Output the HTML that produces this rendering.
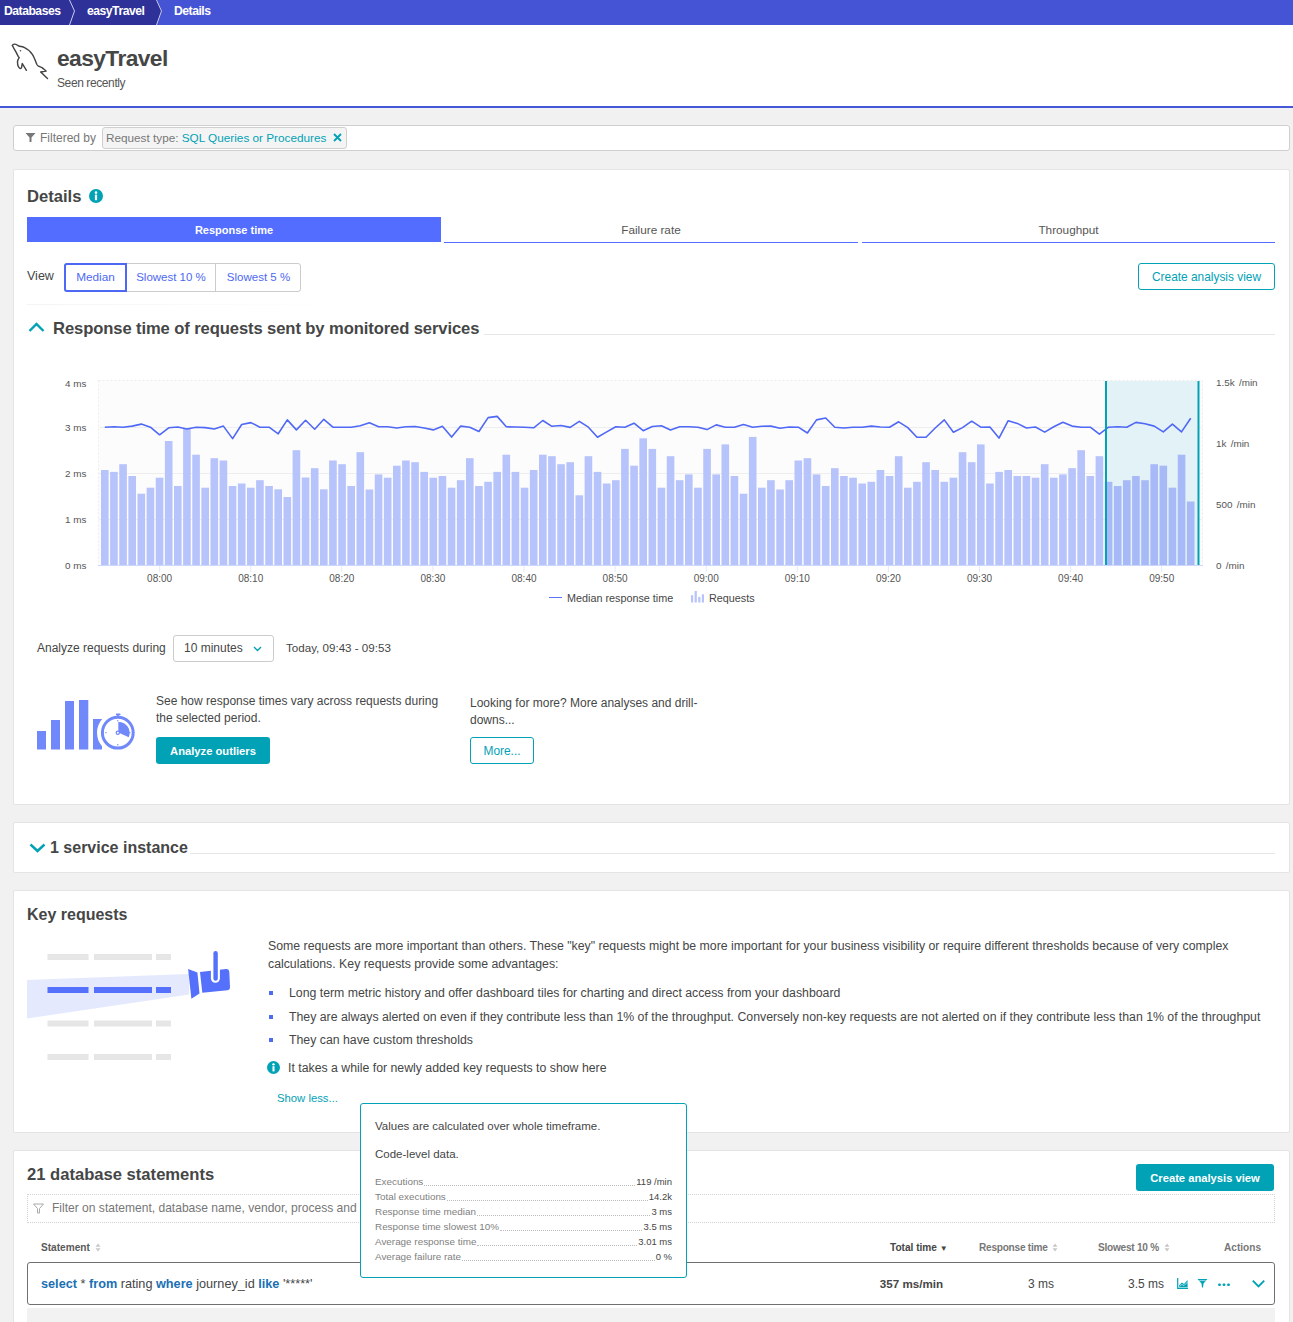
<!DOCTYPE html>
<html><head><meta charset="utf-8">
<style>
*{box-sizing:border-box;margin:0;padding:0}
html,body{width:1293px;height:1322px;overflow:hidden}
body{font-family:"Liberation Sans",sans-serif;color:#454646;background:#f1f1f1;position:relative}
.a{position:absolute;white-space:nowrap}
.card{position:absolute;background:#fff;border:1px solid #e4e4e4;border-radius:2px}
.teal{color:#02a2b6}
.btn-o{position:absolute;border:1px solid #02a2b6;border-radius:3px;color:#02a2b6;background:#fff;font-size:11.9px;text-align:center}
.btn-f{position:absolute;background:#02a2b6;border-radius:3px;color:#fff;font-weight:bold;font-size:11.2px;text-align:center}
</style></head><body>
<!-- breadcrumb -->
<div class="a" style="left:0;top:0;width:1293px;height:25px;background:#4454d4"></div>
<svg class="a" style="left:0;top:0" width="200" height="25">
<polygon points="0,0 157,0 162,11 157,25 0,25" fill="#2e3197"/>
<polyline points="69.5,0 74.5,11 69.5,25" fill="none" stroke="#c9cdf0" stroke-width="1"/>
<polyline points="156.5,0 161.5,11 156.5,25" fill="none" stroke="#c9cdf0" stroke-width="1"/>
</svg>
<div class="a" style="left:4px;top:4px;font-size:12.2px;font-weight:bold;color:#fff;line-height:14px;letter-spacing:-0.5px">Databases</div>
<div class="a" style="left:87px;top:4px;font-size:12.2px;font-weight:bold;color:#fff;line-height:14px;letter-spacing:-0.5px">easyTravel</div>
<div class="a" style="left:174px;top:4px;font-size:12.2px;font-weight:bold;color:#fff;line-height:14px;letter-spacing:-0.5px">Details</div>
<!-- header -->
<div class="a" style="left:0;top:25px;width:1293px;height:81px;background:#fff"></div>
<div class="a" style="left:0;top:106.3px;width:1293px;height:1.3px;background:#4556d7"></div>
<svg class="a" style="left:8px;top:38px" width="44" height="44" viewBox="0 0 44 44">
<path d="M4.4,7.5 C5,5.8 7,5.6 9.9,7.5 L11.6,8.3 C13,8.6 14.6,8.8 15.7,9.2 C18,10.2 22,13 24.5,16.7 C26,19 27.5,23 28.9,26.5 C29.5,27.5 30,28 30.6,28.2 L34,29.6 L38.1,33 L32.7,34 L39.5,40.5" fill="none" stroke="#444" stroke-width="1.45" stroke-linejoin="round" stroke-linecap="round"/>
<path d="M4.4,7.5 C5.5,10 7,12 7.8,13.6 L10.2,18.4 L11.2,19.7 C10,21.5 9.5,22.5 9.5,23.8 C9.5,26 9.8,27.5 10.2,28.2 C11,29.5 11.5,30.6 12.2,30.6 C13,30.6 13.5,29.5 13.6,29.3 L14.3,25.5 L18.4,32.3" fill="none" stroke="#444" stroke-width="1.45" stroke-linejoin="round" stroke-linecap="round"/>
<circle cx="12.5" cy="12.7" r="0.8" fill="#4a4a4a"/>
</svg>
<div class="a" style="left:57px;top:45px;font-size:22.8px;font-weight:bold;color:#454646;line-height:27px;letter-spacing:-0.6px">easyTravel</div>
<div class="a" style="left:57px;top:75.5px;font-size:12px;color:#555;line-height:14px;letter-spacing:-0.4px">Seen recently</div>
<!-- filter bar -->
<div class="a" style="left:13px;top:125px;width:1277px;height:26px;background:#fff;border:1px solid #cfcfcf;border-radius:3px"></div>
<svg class="a" style="left:25px;top:132px" width="11" height="11" viewBox="0 0 11 11"><path d="M0.5,1 L10.5,1 L6.5,5.5 L6.5,10 L4.5,10 L4.5,5.5 Z" fill="#777"/></svg>
<div class="a" style="left:40px;top:131px;font-size:12px;color:#777;line-height:14px">Filtered by</div>
<div class="a" style="left:102px;top:127px;width:245px;height:22px;background:#f4f4f4;border:1px solid #cfcfcf;border-radius:3px"></div>
<div class="a" style="left:106px;top:131px;font-size:11.75px;color:#777;line-height:14px">Request type: <span class="teal">SQL Queries or Procedures</span></div>
<svg class="a" style="left:333px;top:133px" width="9" height="9" viewBox="0 0 9 9"><path d="M1,1 L8,8 M8,1 L1,8" stroke="#02a2b6" stroke-width="1.8"/></svg>

<!-- details card -->
<div class="card" style="left:13px;top:169px;width:1277px;height:636px"></div>
<div class="a" style="left:27px;top:187px;font-size:16.6px;font-weight:bold;line-height:20px">Details</div>
<svg class="a" style="left:89px;top:189px" width="14" height="14" viewBox="0 0 14 14"><circle cx="7" cy="7" r="7" fill="#02a2b6"/><circle cx="7" cy="3.6" r="1.3" fill="#fff"/><rect x="5.9" y="5.6" width="2.2" height="5.6" fill="#fff"/></svg>
<div class="a" style="left:27px;top:217px;width:414px;height:25px;background:#526dff;color:#fff;font-weight:bold;font-size:11px;text-align:center;line-height:26px">Response time</div>
<div class="a" style="left:444px;top:217px;width:414px;height:26px;border-bottom:1.3px solid #526dff;color:#555;font-size:11.75px;text-align:center;line-height:26px">Failure rate</div>
<div class="a" style="left:862px;top:217px;width:413px;height:26px;border-bottom:1.3px solid #526dff;color:#555;font-size:11.75px;text-align:center;line-height:26px">Throughput</div>
<div class="a" style="left:27px;top:269px;font-size:12.5px;color:#454646;line-height:14px">View</div>
<div class="a" style="left:64px;top:263px;width:237px;height:29px;border:1px solid #ccc;border-radius:3px"></div>
<div class="a" style="left:215px;top:263px;width:1px;height:29px;background:#ccc"></div>
<div class="a" style="left:64px;top:263px;width:63px;height:29px;border:2px solid #4d68f2;border-radius:3px 0 0 3px;color:#4d68f2;font-size:11.8px;text-align:center;line-height:25px">Median</div>
<div class="a" style="left:127px;top:263px;width:88px;height:29px;color:#4d68f2;font-size:11.5px;text-align:center;line-height:28px">Slowest 10 %</div>
<div class="a" style="left:216px;top:263px;width:85px;height:29px;color:#4d68f2;font-size:11.5px;text-align:center;line-height:28px">Slowest 5 %</div>
<div class="btn-o" style="left:1138px;top:263px;width:137px;height:27px;line-height:26.5px">Create analysis view</div>
<div class="a" style="left:27px;top:304px;width:320px;height:1px;background:linear-gradient(90deg,#f4f4f4,#fcfcfc 70%,#fff)"></div>
<svg class="a" style="left:28px;top:321px" width="17" height="12" viewBox="0 0 17 12"><polyline points="1.5,10 8.5,3 15.5,10" fill="none" stroke="#02a2b6" stroke-width="2.4"/></svg>
<div class="a" style="left:53px;top:319px;font-size:16.6px;font-weight:bold;line-height:20px;letter-spacing:-0.1px">Response time of requests sent by monitored services</div>
<div class="a" style="left:484px;top:334px;width:791px;height:1px;background:#e6e6e6"></div>

<!-- chart -->
<svg class="a" style="left:0;top:0" width="1293" height="620">
<rect x="98.5" y="380.5" width="1104" height="185" fill="#fcfcfc" stroke="#ececec" stroke-dasharray="2,2"/>
<line x1="99" y1="427.5" x2="1202" y2="427.5" stroke="#eeeeee"/>
<line x1="99" y1="473.5" x2="1202" y2="473.5" stroke="#eeeeee"/>
<line x1="99" y1="519.5" x2="1202" y2="519.5" stroke="#eeeeee"/>
<rect x="1106" y="381" width="92" height="184" fill="#e3f2f6"/>
<rect x="101.00" y="470.0" width="7.6" height="95.5" fill="#b7c3fb"/>
<rect x="110.12" y="471.9" width="7.6" height="93.6" fill="#b7c3fb"/>
<rect x="119.25" y="464.2" width="7.6" height="101.3" fill="#b7c3fb"/>
<rect x="128.38" y="476.0" width="7.6" height="89.5" fill="#b7c3fb"/>
<rect x="137.50" y="493.7" width="7.6" height="71.8" fill="#b7c3fb"/>
<rect x="146.62" y="487.7" width="7.6" height="77.8" fill="#b7c3fb"/>
<rect x="155.75" y="477.7" width="7.6" height="87.8" fill="#b7c3fb"/>
<rect x="164.88" y="441.0" width="7.6" height="124.5" fill="#b7c3fb"/>
<rect x="174.00" y="486.0" width="7.6" height="79.5" fill="#b7c3fb"/>
<rect x="183.12" y="429.0" width="7.6" height="136.5" fill="#b7c3fb"/>
<rect x="192.25" y="454.7" width="7.6" height="110.8" fill="#b7c3fb"/>
<rect x="201.38" y="487.7" width="7.6" height="77.8" fill="#b7c3fb"/>
<rect x="210.50" y="458.2" width="7.6" height="107.3" fill="#b7c3fb"/>
<rect x="219.62" y="460.5" width="7.6" height="105.0" fill="#b7c3fb"/>
<rect x="228.75" y="486.0" width="7.6" height="79.5" fill="#b7c3fb"/>
<rect x="237.88" y="483.5" width="7.6" height="82.0" fill="#b7c3fb"/>
<rect x="247.00" y="487.7" width="7.6" height="77.8" fill="#b7c3fb"/>
<rect x="256.12" y="480.2" width="7.6" height="85.3" fill="#b7c3fb"/>
<rect x="265.25" y="486.0" width="7.6" height="79.5" fill="#b7c3fb"/>
<rect x="274.38" y="489.3" width="7.6" height="76.2" fill="#b7c3fb"/>
<rect x="283.50" y="497.0" width="7.6" height="68.5" fill="#b7c3fb"/>
<rect x="292.62" y="450.2" width="7.6" height="115.3" fill="#b7c3fb"/>
<rect x="301.75" y="477.5" width="7.6" height="88.0" fill="#b7c3fb"/>
<rect x="310.88" y="468.2" width="7.6" height="97.3" fill="#b7c3fb"/>
<rect x="320.00" y="489.3" width="7.6" height="76.2" fill="#b7c3fb"/>
<rect x="329.12" y="460.5" width="7.6" height="105.0" fill="#b7c3fb"/>
<rect x="338.25" y="464.2" width="7.6" height="101.3" fill="#b7c3fb"/>
<rect x="347.38" y="486.0" width="7.6" height="79.5" fill="#b7c3fb"/>
<rect x="356.50" y="452.2" width="7.6" height="113.3" fill="#b7c3fb"/>
<rect x="365.62" y="489.5" width="7.6" height="76.0" fill="#b7c3fb"/>
<rect x="374.75" y="474.4" width="7.6" height="91.1" fill="#b7c3fb"/>
<rect x="383.88" y="477.7" width="7.6" height="87.8" fill="#b7c3fb"/>
<rect x="393.00" y="465.7" width="7.6" height="99.8" fill="#b7c3fb"/>
<rect x="402.12" y="460.5" width="7.6" height="105.0" fill="#b7c3fb"/>
<rect x="411.25" y="462.2" width="7.6" height="103.3" fill="#b7c3fb"/>
<rect x="420.38" y="471.9" width="7.6" height="93.6" fill="#b7c3fb"/>
<rect x="429.50" y="477.7" width="7.6" height="87.8" fill="#b7c3fb"/>
<rect x="438.62" y="476.0" width="7.6" height="89.5" fill="#b7c3fb"/>
<rect x="447.75" y="487.7" width="7.6" height="77.8" fill="#b7c3fb"/>
<rect x="456.88" y="480.2" width="7.6" height="85.3" fill="#b7c3fb"/>
<rect x="466.00" y="458.2" width="7.6" height="107.3" fill="#b7c3fb"/>
<rect x="475.12" y="486.0" width="7.6" height="79.5" fill="#b7c3fb"/>
<rect x="484.25" y="481.8" width="7.6" height="83.7" fill="#b7c3fb"/>
<rect x="493.38" y="471.9" width="7.6" height="93.6" fill="#b7c3fb"/>
<rect x="502.50" y="454.7" width="7.6" height="110.8" fill="#b7c3fb"/>
<rect x="511.62" y="471.9" width="7.6" height="93.6" fill="#b7c3fb"/>
<rect x="520.75" y="487.7" width="7.6" height="77.8" fill="#b7c3fb"/>
<rect x="529.88" y="470.0" width="7.6" height="95.5" fill="#b7c3fb"/>
<rect x="539.00" y="454.7" width="7.6" height="110.8" fill="#b7c3fb"/>
<rect x="548.12" y="456.2" width="7.6" height="109.3" fill="#b7c3fb"/>
<rect x="557.25" y="464.2" width="7.6" height="101.3" fill="#b7c3fb"/>
<rect x="566.38" y="462.2" width="7.6" height="103.3" fill="#b7c3fb"/>
<rect x="575.50" y="495.3" width="7.6" height="70.2" fill="#b7c3fb"/>
<rect x="584.62" y="456.2" width="7.6" height="109.3" fill="#b7c3fb"/>
<rect x="593.75" y="471.9" width="7.6" height="93.6" fill="#b7c3fb"/>
<rect x="602.88" y="483.5" width="7.6" height="82.0" fill="#b7c3fb"/>
<rect x="612.00" y="480.2" width="7.6" height="85.3" fill="#b7c3fb"/>
<rect x="621.12" y="448.9" width="7.6" height="116.6" fill="#b7c3fb"/>
<rect x="630.25" y="465.7" width="7.6" height="99.8" fill="#b7c3fb"/>
<rect x="639.38" y="438.3" width="7.6" height="127.2" fill="#b7c3fb"/>
<rect x="648.50" y="448.9" width="7.6" height="116.6" fill="#b7c3fb"/>
<rect x="657.62" y="487.7" width="7.6" height="77.8" fill="#b7c3fb"/>
<rect x="666.75" y="456.2" width="7.6" height="109.3" fill="#b7c3fb"/>
<rect x="675.88" y="480.2" width="7.6" height="85.3" fill="#b7c3fb"/>
<rect x="685.00" y="474.4" width="7.6" height="91.1" fill="#b7c3fb"/>
<rect x="694.12" y="487.7" width="7.6" height="77.8" fill="#b7c3fb"/>
<rect x="703.25" y="448.9" width="7.6" height="116.6" fill="#b7c3fb"/>
<rect x="712.38" y="474.4" width="7.6" height="91.1" fill="#b7c3fb"/>
<rect x="721.50" y="444.4" width="7.6" height="121.1" fill="#b7c3fb"/>
<rect x="730.62" y="476.0" width="7.6" height="89.5" fill="#b7c3fb"/>
<rect x="739.75" y="493.7" width="7.6" height="71.8" fill="#b7c3fb"/>
<rect x="748.88" y="436.9" width="7.6" height="128.6" fill="#b7c3fb"/>
<rect x="758.00" y="487.7" width="7.6" height="77.8" fill="#b7c3fb"/>
<rect x="767.12" y="480.2" width="7.6" height="85.3" fill="#b7c3fb"/>
<rect x="776.25" y="489.5" width="7.6" height="76.0" fill="#b7c3fb"/>
<rect x="785.38" y="480.2" width="7.6" height="85.3" fill="#b7c3fb"/>
<rect x="794.50" y="460.5" width="7.6" height="105.0" fill="#b7c3fb"/>
<rect x="803.62" y="458.2" width="7.6" height="107.3" fill="#b7c3fb"/>
<rect x="812.75" y="474.4" width="7.6" height="91.1" fill="#b7c3fb"/>
<rect x="821.88" y="486.0" width="7.6" height="79.5" fill="#b7c3fb"/>
<rect x="831.00" y="468.2" width="7.6" height="97.3" fill="#b7c3fb"/>
<rect x="840.12" y="476.0" width="7.6" height="89.5" fill="#b7c3fb"/>
<rect x="849.25" y="477.7" width="7.6" height="87.8" fill="#b7c3fb"/>
<rect x="858.38" y="483.5" width="7.6" height="82.0" fill="#b7c3fb"/>
<rect x="867.50" y="481.8" width="7.6" height="83.7" fill="#b7c3fb"/>
<rect x="876.62" y="470.0" width="7.6" height="95.5" fill="#b7c3fb"/>
<rect x="885.75" y="476.0" width="7.6" height="89.5" fill="#b7c3fb"/>
<rect x="894.88" y="456.2" width="7.6" height="109.3" fill="#b7c3fb"/>
<rect x="904.00" y="487.7" width="7.6" height="77.8" fill="#b7c3fb"/>
<rect x="913.12" y="481.8" width="7.6" height="83.7" fill="#b7c3fb"/>
<rect x="922.25" y="462.2" width="7.6" height="103.3" fill="#b7c3fb"/>
<rect x="931.38" y="470.0" width="7.6" height="95.5" fill="#b7c3fb"/>
<rect x="940.50" y="481.8" width="7.6" height="83.7" fill="#b7c3fb"/>
<rect x="949.62" y="477.7" width="7.6" height="87.8" fill="#b7c3fb"/>
<rect x="958.75" y="452.2" width="7.6" height="113.3" fill="#b7c3fb"/>
<rect x="967.88" y="462.2" width="7.6" height="103.3" fill="#b7c3fb"/>
<rect x="977.00" y="444.4" width="7.6" height="121.1" fill="#b7c3fb"/>
<rect x="986.12" y="483.5" width="7.6" height="82.0" fill="#b7c3fb"/>
<rect x="995.25" y="471.9" width="7.6" height="93.6" fill="#b7c3fb"/>
<rect x="1004.38" y="470.0" width="7.6" height="95.5" fill="#b7c3fb"/>
<rect x="1013.50" y="476.0" width="7.6" height="89.5" fill="#b7c3fb"/>
<rect x="1022.62" y="476.0" width="7.6" height="89.5" fill="#b7c3fb"/>
<rect x="1031.75" y="477.7" width="7.6" height="87.8" fill="#b7c3fb"/>
<rect x="1040.88" y="464.2" width="7.6" height="101.3" fill="#b7c3fb"/>
<rect x="1050.00" y="477.7" width="7.6" height="87.8" fill="#b7c3fb"/>
<rect x="1059.12" y="474.4" width="7.6" height="91.1" fill="#b7c3fb"/>
<rect x="1068.25" y="468.2" width="7.6" height="97.3" fill="#b7c3fb"/>
<rect x="1077.38" y="450.2" width="7.6" height="115.3" fill="#b7c3fb"/>
<rect x="1086.50" y="476.0" width="7.6" height="89.5" fill="#b7c3fb"/>
<rect x="1095.62" y="456.2" width="7.6" height="109.3" fill="#b7c3fb"/>
<rect x="1104.75" y="481.8" width="7.6" height="83.7" fill="#a7b9f6"/>
<rect x="1113.88" y="486.0" width="7.6" height="79.5" fill="#a7b9f6"/>
<rect x="1123.00" y="480.2" width="7.6" height="85.3" fill="#a7b9f6"/>
<rect x="1132.12" y="476.0" width="7.6" height="89.5" fill="#a7b9f6"/>
<rect x="1141.25" y="480.2" width="7.6" height="85.3" fill="#a7b9f6"/>
<rect x="1150.38" y="464.2" width="7.6" height="101.3" fill="#a7b9f6"/>
<rect x="1159.50" y="465.7" width="7.6" height="99.8" fill="#a7b9f6"/>
<rect x="1168.62" y="487.7" width="7.6" height="77.8" fill="#a7b9f6"/>
<rect x="1177.75" y="454.7" width="7.6" height="110.8" fill="#a7b9f6"/>
<rect x="1186.88" y="501.5" width="7.6" height="64.0" fill="#a7b9f6"/>
<rect x="159.1" y="566" width="1" height="6" fill="#e3ecf6"/>
<rect x="250.2" y="566" width="1" height="6" fill="#e3ecf6"/>
<rect x="341.3" y="566" width="1" height="6" fill="#e3ecf6"/>
<rect x="432.4" y="566" width="1" height="6" fill="#e3ecf6"/>
<rect x="523.5" y="566" width="1" height="6" fill="#e3ecf6"/>
<rect x="614.6" y="566" width="1" height="6" fill="#e3ecf6"/>
<rect x="705.7" y="566" width="1" height="6" fill="#e3ecf6"/>
<rect x="796.8" y="566" width="1" height="6" fill="#e3ecf6"/>
<rect x="887.9" y="566" width="1" height="6" fill="#e3ecf6"/>
<rect x="979.0" y="566" width="1" height="6" fill="#e3ecf6"/>
<rect x="1070.1" y="566" width="1" height="6" fill="#e3ecf6"/>
<rect x="1161.2" y="566" width="1" height="6" fill="#e3ecf6"/>
<line x1="98" y1="565.5" x2="1203" y2="565.5" stroke="#cdd6fb"/>
<polyline points="104.8,427.2 113.9,426.7 123.0,427.2 132.2,426.1 141.3,424.1 150.4,427.2 159.6,434.8 168.7,427.8 177.8,427.0 186.9,429.0 196.1,427.2 205.2,427.6 214.3,429.0 223.4,426.1 232.6,438.6 241.7,424.5 250.8,422.6 259.9,427.2 269.1,427.2 278.2,433.8 287.3,419.9 296.4,429.9 305.6,420.3 314.7,429.2 323.8,419.3 332.9,427.2 342.1,427.2 351.2,427.2 360.3,425.7 369.4,422.8 378.6,426.8 387.7,426.8 396.8,428.0 405.9,426.8 415.1,426.5 424.2,428.0 433.3,429.9 442.4,426.3 451.6,437.1 460.7,426.1 469.8,427.2 478.9,431.5 488.1,417.6 497.2,416.4 506.3,426.8 515.4,427.0 524.5,427.2 533.7,427.8 542.8,420.5 551.9,426.3 561.0,425.5 570.2,427.4 579.3,421.4 588.4,427.2 597.5,437.3 606.7,431.9 615.8,426.8 624.9,427.2 634.0,423.2 643.2,430.7 652.3,426.5 661.4,425.7 670.5,429.9 679.7,426.8 688.8,426.8 697.9,427.2 707.0,429.6 716.2,424.9 725.3,427.2 734.4,427.2 743.5,424.5 752.7,427.2 761.8,426.3 770.9,426.1 780.0,428.2 789.2,427.0 798.3,427.2 807.4,433.0 816.5,419.9 825.7,418.0 834.8,427.2 843.9,428.0 853.0,427.2 862.2,427.2 871.3,426.1 880.4,427.0 889.5,427.2 898.7,421.8 907.8,427.6 916.9,437.3 926.0,437.3 935.2,428.0 944.3,419.9 953.4,432.3 962.5,427.6 971.7,421.2 980.8,427.2 989.9,427.0 999.0,438.1 1008.2,420.7 1017.3,423.4 1026.4,428.0 1035.5,427.0 1044.7,432.1 1053.8,426.7 1062.9,422.2 1072.0,426.1 1081.2,427.2 1090.3,427.2 1099.4,434.2 1108.5,427.2 1117.7,426.8 1126.8,427.2 1135.9,422.4 1145.0,423.8 1154.2,426.1 1163.3,431.9 1172.4,424.1 1181.5,431.9 1190.7,418.3" fill="none" stroke="#4f68f5" stroke-width="1.6" stroke-linejoin="round"/>
<rect x="1105" y="381" width="2" height="184" fill="#02a2b6"/>
<rect x="1197.5" y="381" width="2" height="184" fill="#02a2b6"/>
</svg>
<div class="a" style="left:65px;top:377.5px;font-size:9.9px;color:#555;line-height:12px">4 ms</div>
<div class="a" style="left:65px;top:421.5px;font-size:9.9px;color:#555;line-height:12px">3 ms</div>
<div class="a" style="left:65px;top:467.5px;font-size:9.9px;color:#555;line-height:12px">2 ms</div>
<div class="a" style="left:65px;top:513.5px;font-size:9.9px;color:#555;line-height:12px">1 ms</div>
<div class="a" style="left:65px;top:559.5px;font-size:9.9px;color:#555;line-height:12px">0 ms</div>
<div class="a" style="left:1216px;top:377px;font-size:9.9px;color:#555;line-height:12px;word-spacing:1.5px">1.5k /min</div>
<div class="a" style="left:1216px;top:438px;font-size:9.9px;color:#555;line-height:12px;word-spacing:1.5px">1k /min</div>
<div class="a" style="left:1216px;top:499px;font-size:9.9px;color:#555;line-height:12px;word-spacing:1.5px">500 /min</div>
<div class="a" style="left:1216px;top:560px;font-size:9.9px;color:#555;line-height:12px;word-spacing:1.5px">0 /min</div>
<div class="a" style="left:139.6px;top:572.5px;width:40px;text-align:center;font-size:10px;color:#555;line-height:12px">08:00</div>
<div class="a" style="left:230.7px;top:572.5px;width:40px;text-align:center;font-size:10px;color:#555;line-height:12px">08:10</div>
<div class="a" style="left:321.8px;top:572.5px;width:40px;text-align:center;font-size:10px;color:#555;line-height:12px">08:20</div>
<div class="a" style="left:412.9px;top:572.5px;width:40px;text-align:center;font-size:10px;color:#555;line-height:12px">08:30</div>
<div class="a" style="left:504.0px;top:572.5px;width:40px;text-align:center;font-size:10px;color:#555;line-height:12px">08:40</div>
<div class="a" style="left:595.1px;top:572.5px;width:40px;text-align:center;font-size:10px;color:#555;line-height:12px">08:50</div>
<div class="a" style="left:686.2px;top:572.5px;width:40px;text-align:center;font-size:10px;color:#555;line-height:12px">09:00</div>
<div class="a" style="left:777.3px;top:572.5px;width:40px;text-align:center;font-size:10px;color:#555;line-height:12px">09:10</div>
<div class="a" style="left:868.4px;top:572.5px;width:40px;text-align:center;font-size:10px;color:#555;line-height:12px">09:20</div>
<div class="a" style="left:959.5px;top:572.5px;width:40px;text-align:center;font-size:10px;color:#555;line-height:12px">09:30</div>
<div class="a" style="left:1050.6px;top:572.5px;width:40px;text-align:center;font-size:10px;color:#555;line-height:12px">09:40</div>
<div class="a" style="left:1141.7px;top:572.5px;width:40px;text-align:center;font-size:10px;color:#555;line-height:12px">09:50</div>
<div class="a" style="left:549px;top:597.3px;width:13px;height:1.2px;background:#5b72f5"></div>
<div class="a" style="left:567px;top:591px;font-size:10.8px;color:#454646;line-height:14px">Median response time</div>
<svg class="a" style="left:691px;top:591px" width="14" height="13" viewBox="0 0 14 13"><rect x="0" y="4.2" width="2.2" height="7.3" fill="#b7c3fb"/><rect x="3.6" y="0" width="2.2" height="11.5" fill="#b7c3fb"/><rect x="7.2" y="5.9" width="2.2" height="5.6" fill="#b7c3fb"/><rect x="10.8" y="3.3" width="2.2" height="8.2" fill="#b7c3fb"/></svg>
<div class="a" style="left:709px;top:591px;font-size:10.8px;color:#454646;line-height:14px">Requests</div>

<!-- analyze -->
<div class="a" style="left:37px;top:641px;font-size:12px;color:#454646;line-height:14px">Analyze requests during</div>
<div class="a" style="left:173px;top:635px;width:101px;height:27px;border:1px solid #ccc;border-radius:3px"></div>
<div class="a" style="left:184px;top:641px;font-size:12px;color:#454646;line-height:14px">10 minutes</div>
<svg class="a" style="left:253px;top:646px" width="9" height="6" viewBox="0 0 9 6"><polyline points="1,1 4.5,4.5 8,1" fill="none" stroke="#02a2b6" stroke-width="1.4"/></svg>
<div class="a" style="left:286px;top:641px;font-size:11.6px;color:#454646;line-height:14px">Today, 09:43 - 09:53</div>

<svg class="a" style="left:30px;top:690px" width="110" height="65" viewBox="30 690 110 65">
<g fill="#7088f9">
<rect x="37" y="731" width="9" height="18.5"/>
<rect x="51" y="720" width="9" height="29.5"/>
<rect x="65" y="701" width="9" height="48.5"/>
<rect x="79" y="700" width="9.3" height="49.5"/>
<rect x="93" y="719" width="9" height="30.5"/>
</g>
<circle cx="117.8" cy="732.7" r="20.8" fill="#fff"/>
<circle cx="117.8" cy="732.7" r="15.4" fill="none" stroke="#7088f9" stroke-width="3"/>
<rect x="115.9" y="713.6" width="4.7" height="1.6" rx="0.8" fill="#7088f9"/>
<rect x="116.8" y="714.5" width="2" height="3" fill="#7088f9"/>
<path d="M118.3,733 L118.3,722 A10.8,10.8 0 0 1 128.6,737.4 Z" fill="#7088f9"/>
<line x1="117.8" y1="732.7" x2="128.8" y2="737.8" stroke="#fff" stroke-width="0.9"/>
<circle cx="117.8" cy="732.7" r="2.2" fill="#7088f9"/>
<circle cx="117.8" cy="732.7" r="1" fill="#fff"/>
<g fill="#7088f9"><rect x="117.3" y="720" width="1" height="1.5"/><rect x="117.3" y="744" width="1" height="1.5"/><rect x="105.2" y="732.2" width="1.5" height="1"/><rect x="129" y="732.2" width="1.5" height="1"/></g>
</svg>
<div class="a" style="left:156px;top:693px;font-size:12px;color:#454646;line-height:17px">See how response times vary across requests during<br>the selected period.</div>
<div class="btn-f" style="left:156px;top:737px;width:114px;height:27px;line-height:28px">Analyze outliers</div>
<div class="a" style="left:470px;top:695px;font-size:12px;color:#454646;line-height:17px">Looking for more? More analyses and drill-<br>downs...</div>
<div class="btn-o" style="left:470px;top:737px;width:64px;height:27px;line-height:26.5px">More...</div>

<!-- service instance card -->
<div class="card" style="left:13px;top:822px;width:1277px;height:51px"></div>
<svg class="a" style="left:29px;top:843px" width="17" height="11" viewBox="0 0 17 11"><polyline points="1.5,1.5 8.5,8 15.5,1.5" fill="none" stroke="#02a2b6" stroke-width="2.4"/></svg>
<div class="a" style="left:50px;top:838px;font-size:16px;font-weight:bold;line-height:20px">1 service instance</div>
<div class="a" style="left:190px;top:853px;width:1085px;height:1px;background:#e6e6e6"></div>

<!-- key requests card -->
<div class="card" style="left:13px;top:890px;width:1277px;height:243px"></div>
<div class="a" style="left:27px;top:905px;font-size:16px;font-weight:bold;line-height:20px">Key requests</div>
<svg class="a" style="left:20px;top:945px" width="220" height="120" viewBox="20 945 220 120">
<g fill="#e6e6e6">
<rect x="47.5" y="954" width="41" height="6"/><rect x="94" y="954" width="58" height="6"/><rect x="156" y="954" width="15" height="6"/>
<rect x="47.5" y="1020.5" width="41" height="6"/><rect x="94" y="1020.5" width="58" height="6"/><rect x="156" y="1020.5" width="15" height="6"/>
<rect x="47.5" y="1054" width="41" height="6"/><rect x="94" y="1054" width="58" height="6"/><rect x="156" y="1054" width="15" height="6"/>
</g>
<polygon points="27,980 189,974 189,994.5 27,1018.5" fill="#e4e9fd"/>
<g fill="#5570fa">
<rect x="47.5" y="987" width="41" height="6"/><rect x="94" y="987" width="58" height="6"/><rect x="156" y="987" width="15" height="6"/>
<polygon points="188.1,968.9 197.4,972.4 199.5,993.5 191.4,998.8"/>
<path d="M200,971.9 L226,969.1 Q229,968.8 229.3,972 L230,987 Q230.2,989.8 227.5,990.2 L202.3,992.8 Z"/>
</g>
<rect x="210.9" y="948" width="9" height="34.8" rx="4.5" fill="#fff"/>
<rect x="213.4" y="951" width="4.4" height="29.7" rx="2.2" fill="#5570fa"/>
</svg>
<div class="a" style="left:268px;top:937px;font-size:12.3px;color:#454646;line-height:18px">Some requests are more important than others. These "key" requests might be more important for your business visibility or require different thresholds because of very complex<br>calculations. Key requests provide some advantages:</div>
<div class="a" style="left:269px;top:991px;width:4px;height:4px;background:#4f6bf0"></div>
<div class="a" style="left:269px;top:1015px;width:4px;height:4px;background:#4f6bf0"></div>
<div class="a" style="left:269px;top:1038px;width:4px;height:4px;background:#4f6bf0"></div>
<div class="a" style="left:289px;top:985px;font-size:12.3px;color:#454646;line-height:16px">Long term metric history and offer dashboard tiles for charting and direct access from your dashboard</div>
<div class="a" style="left:289px;top:1009px;font-size:12.3px;color:#454646;line-height:16px">They are always alerted on even if they contribute less than 1% of the throughput. Conversely non-key requests are not alerted on if they contribute less than 1% of the throughput</div>
<div class="a" style="left:289px;top:1032px;font-size:12.3px;color:#454646;line-height:16px">They can have custom thresholds</div>
<svg class="a" style="left:266.5px;top:1061px" width="13" height="13" viewBox="0 0 14 14"><circle cx="7" cy="7" r="7" fill="#02a2b6"/><circle cx="7" cy="3.6" r="1.3" fill="#fff"/><rect x="5.9" y="5.6" width="2.2" height="5.6" fill="#fff"/></svg>
<div class="a" style="left:288px;top:1059.5px;font-size:12.3px;color:#454646;line-height:16px">It takes a while for newly added key requests to show here</div>
<div class="a" style="left:277px;top:1090px;font-size:11.3px;color:#02a2b6;line-height:16px">Show less...</div>

<!-- db statements card -->
<div class="card" style="left:13px;top:1150px;width:1277px;height:200px"></div>
<div class="a" style="left:27px;top:1165px;font-size:16.6px;font-weight:bold;line-height:20px">21 database statements</div>
<div class="btn-f" style="left:1136px;top:1164px;width:138px;height:27px;line-height:28px">Create analysis view</div>
<div class="a" style="left:27px;top:1194px;width:1248px;height:29px;border:1px dotted #d2d2d2"></div>
<svg class="a" style="left:33px;top:1203px" width="11" height="11" viewBox="0 0 11 11"><path d="M0.5,1 L10.5,1 L6.5,5.5 L6.5,10 L4.5,10 L4.5,5.5 Z" fill="none" stroke="#aaa" stroke-width="1"/></svg>
<div class="a" style="left:52px;top:1201px;font-size:12.05px;color:#777;line-height:14px">Filter on statement, database name, vendor, process and host</div>
<div class="a" style="left:41px;top:1242px;font-size:10.1px;font-weight:bold;color:#5a5a5a;line-height:12px">Statement <svg width="6" height="9" viewBox="0 0 6 9" style="vertical-align:-1px;margin-left:2px"><path d="M3,0.5 L5.5,3.8 L0.5,3.8 Z M3,8.5 L5.5,5.2 L0.5,5.2 Z" fill="#c8c8c8"/></svg></div>
<div class="a" style="left:890px;top:1242px;font-size:10.1px;font-weight:bold;color:#454646;line-height:12px">Total time <span style="font-size:8px">&#x25BC;</span></div>
<div class="a" style="left:979px;top:1242px;font-size:10.1px;letter-spacing:-0.25px;font-weight:bold;color:#777;line-height:12px">Response time <svg width="6" height="9" viewBox="0 0 6 9" style="vertical-align:-1px;margin-left:2px"><path d="M3,0.5 L5.5,3.8 L0.5,3.8 Z M3,8.5 L5.5,5.2 L0.5,5.2 Z" fill="#c8c8c8"/></svg></div>
<div class="a" style="left:1098px;top:1242px;font-size:10.1px;letter-spacing:-0.25px;font-weight:bold;color:#777;line-height:12px">Slowest 10 % <svg width="6" height="9" viewBox="0 0 6 9" style="vertical-align:-1px;margin-left:2px"><path d="M3,0.5 L5.5,3.8 L0.5,3.8 Z M3,8.5 L5.5,5.2 L0.5,5.2 Z" fill="#c8c8c8"/></svg></div>
<div class="a" style="left:1161px;top:1242px;width:100px;text-align:right;font-size:10.1px;font-weight:bold;color:#777;line-height:12px">Actions</div>
<div class="a" style="left:27px;top:1262px;width:1248px;height:43px;border:1px solid #707070;border-radius:3px;background:#fff"></div>
<div class="a" style="left:27px;top:1308px;width:1248px;height:20px;background:#f2f2f2"></div>
<div class="a" style="left:41px;top:1276px;font-size:12.7px;color:#454646;line-height:16px"><b style="color:#1a70b4">select</b> * <b style="color:#1a70b4">from</b> rating <b style="color:#1a70b4">where</b> journey_id <b style="color:#1a70b4">like</b> '*****'</div>
<div class="a" style="left:843px;top:1276px;width:100px;text-align:right;font-size:11.6px;font-weight:bold;color:#454646;line-height:16px">357 ms/min</div>
<div class="a" style="left:954px;top:1276px;width:100px;text-align:right;font-size:12px;color:#454646;line-height:16px">3 ms</div>
<div class="a" style="left:1064px;top:1276px;width:100px;text-align:right;font-size:12px;color:#454646;line-height:16px">3.5 ms</div>
<svg class="a" style="left:1177px;top:1278px" width="12" height="11" viewBox="0 0 12 11"><path d="M0.7,0 L0.7,10.3 L11,10.3" fill="none" stroke="#02a2b6" stroke-width="1.2"/><path d="M2,9.3 L2,7.5 L5,4.5 L7,6 L10.6,2 L10.6,9.3 Z" fill="#02a2b6"/><path d="M2.5,8.6 L5,6.3 L7,7.6 L10.6,4" fill="none" stroke="#fff" stroke-width="0.6"/></svg>
<svg class="a" style="left:1197px;top:1278px" width="11" height="11" viewBox="0 0 11 11"><path d="M0.5,1 L10.5,1 L6.5,5.5 L6,9.6 L5,9.6 L4.5,5.5 Z" fill="#02a2b6"/><line x1="2.2" y1="2.6" x2="8.8" y2="2.6" stroke="#fff" stroke-width="0.6"/></svg>
<svg class="a" style="left:1218px;top:1283px" width="13" height="4" viewBox="0 0 13 4"><rect x="0.2" y="0.4" width="2.6" height="2.6" rx="0.8" fill="#02a2b6"/><rect x="4.7" y="0.4" width="2.6" height="2.6" rx="0.8" fill="#02a2b6"/><rect x="9.2" y="0.4" width="2.6" height="2.6" rx="0.8" fill="#02a2b6"/></svg>
<svg class="a" style="left:1251px;top:1279px" width="15" height="10" viewBox="0 0 15 10"><polyline points="1.8,1.6 7.5,7.3 13.2,1.6" fill="none" stroke="#02a2b6" stroke-width="1.9"/></svg>

<!-- popup -->
<div class="a" style="left:360px;top:1103px;width:327px;height:175px;background:#fff;border:1px solid #02a2b6;border-radius:3px"></div>
<div class="a" style="left:375px;top:1119px;font-size:11.5px;color:#454646;line-height:14px">Values are calculated over whole timeframe.</div>
<div class="a" style="left:375px;top:1147px;font-size:11.5px;color:#454646;line-height:14px">Code-level data.</div>
<div class="a" style="left:375px;top:1175.8px;width:297px;height:12px;font-size:9.5px;line-height:12px;display:flex;white-space:nowrap"><span style="color:#808080;font-size:9.9px">Executions</span><span style="flex:1;border-bottom:1px dotted #bbb;margin:0 1px 2px 1px"></span><span style="color:#454646">119 /min</span></div>
<div class="a" style="left:375px;top:1190.8px;width:297px;height:12px;font-size:9.5px;line-height:12px;display:flex;white-space:nowrap"><span style="color:#808080;font-size:9.9px">Total executions</span><span style="flex:1;border-bottom:1px dotted #bbb;margin:0 1px 2px 1px"></span><span style="color:#454646">14.2k</span></div>
<div class="a" style="left:375px;top:1205.7px;width:297px;height:12px;font-size:9.5px;line-height:12px;display:flex;white-space:nowrap"><span style="color:#808080;font-size:9.9px">Response time median</span><span style="flex:1;border-bottom:1px dotted #bbb;margin:0 1px 2px 1px"></span><span style="color:#454646">3 ms</span></div>
<div class="a" style="left:375px;top:1220.6px;width:297px;height:12px;font-size:9.5px;line-height:12px;display:flex;white-space:nowrap"><span style="color:#808080;font-size:9.9px">Response time slowest 10%</span><span style="flex:1;border-bottom:1px dotted #bbb;margin:0 1px 2px 1px"></span><span style="color:#454646">3.5 ms</span></div>
<div class="a" style="left:375px;top:1235.6px;width:297px;height:12px;font-size:9.5px;line-height:12px;display:flex;white-space:nowrap"><span style="color:#808080;font-size:9.9px">Average response time</span><span style="flex:1;border-bottom:1px dotted #bbb;margin:0 1px 2px 1px"></span><span style="color:#454646">3.01 ms</span></div>
<div class="a" style="left:375px;top:1250.5px;width:297px;height:12px;font-size:9.5px;line-height:12px;display:flex;white-space:nowrap"><span style="color:#808080;font-size:9.9px">Average failure rate</span><span style="flex:1;border-bottom:1px dotted #bbb;margin:0 1px 2px 1px"></span><span style="color:#454646">0 %</span></div>
</body></html>
